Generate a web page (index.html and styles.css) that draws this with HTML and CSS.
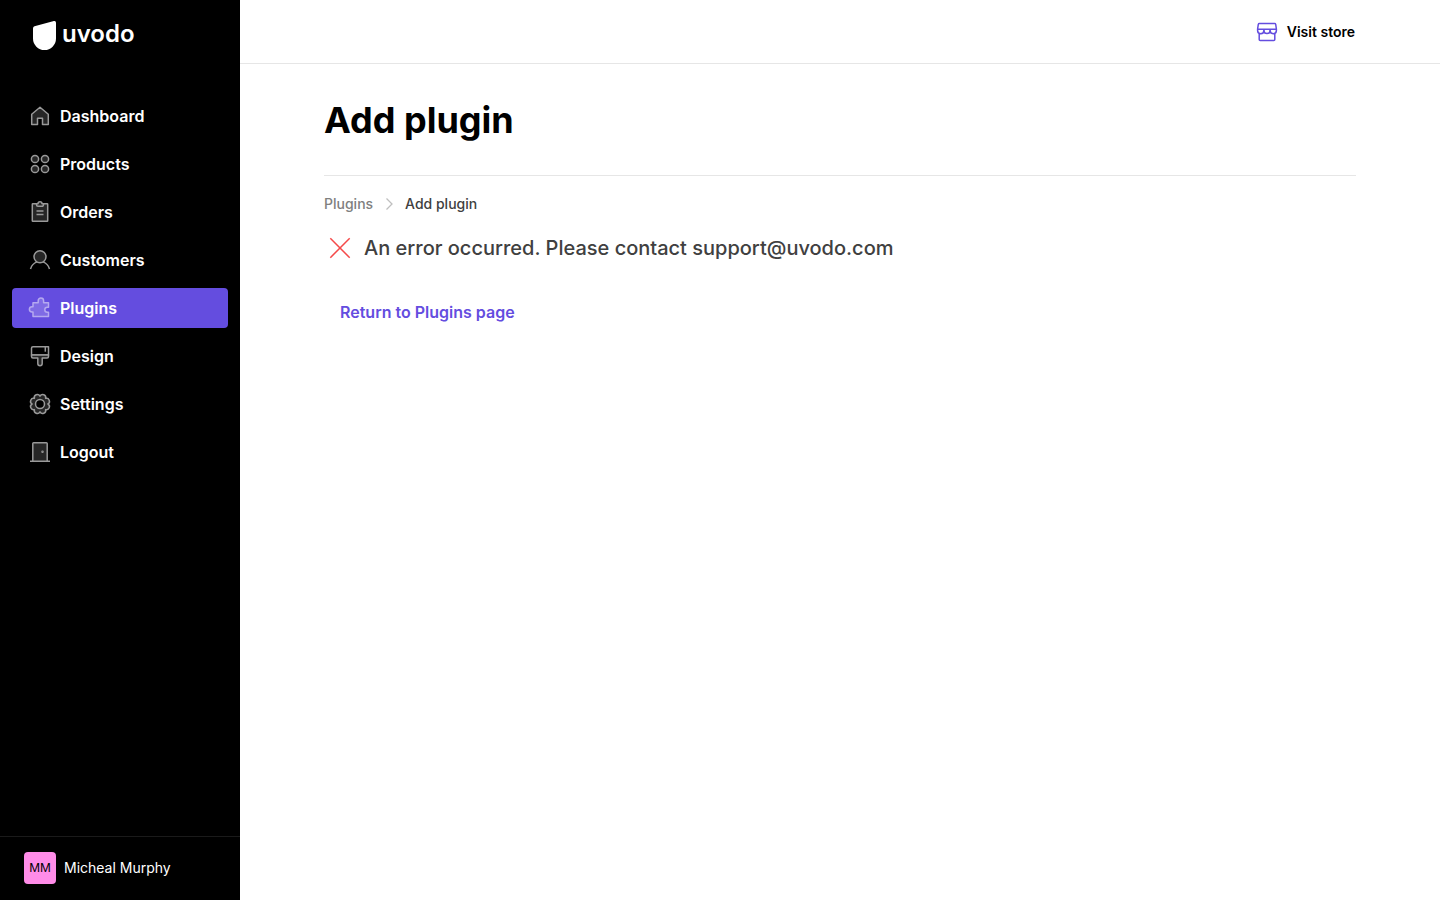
FILE: index.html
```html
<!DOCTYPE html>
<html lang="en">

  <head>
    <meta charset="utf-8">
    <meta name="viewport" content="width=device-width, initial-scale=1">
    <title>Add plugin</title>
    <link rel="stylesheet" href="styles.css">
  </head>

  <body>
    <aside class="sidebar">
      <a class="logo" href="#">
        <svg width="24" height="30" viewBox="0 0 24 30" aria-hidden="true">
          <path d="M2.500 6.300 21.900 1.100Q24 .7 24 2.700V18.500A11.500 11.500 0 0 1 1 18.500V8.500Q1 6.700 2.500 6.300Z" fill="#fff"/>
        </svg>
        <span>uvodo</span>
      </a>

      <nav class="menu">
        <a class="menu-item" href="#">
          <svg class="icon" viewBox="0 0 24 24" aria-hidden="true">
            <path d="M3.700 10.200 12 3.200l8.300 7v10.300H14.500v-6.200h-5v6.200H3.700Z"/>
          </svg>
          Dashboard
        </a>
        <a class="menu-item" href="#">
          <svg class="icon" viewBox="0 0 24 24" aria-hidden="true">
            <circle cx="7" cy="7" r="3.600"/>
            <circle cx="17" cy="7" r="3.600"/>
            <circle cx="7" cy="17" r="3.600"/>
            <circle cx="17" cy="17" r="3.600"/>
          </svg>
          Products
        </a>
        <a class="menu-item" href="#">
          <svg class="icon" viewBox="0 0 24 24" aria-hidden="true">
            <rect x="4.300" y="3.800" width="15.400" height="17.500" rx=".5"/>
            <path d="M8.500 3.800H10a2 2 0 0 1 4 0h1.500v1a1.500 1.500 0 0 1-1.500 1.500h-4a1.500 1.500 0 0 1-1.500-1.500Z"/>
            <path d="M8.500 11h7M8.500 14.500h7"/>
          </svg>
          Orders
        </a>
        <a class="menu-item" href="#">
          <svg class="icon" viewBox="0 0 24 24" aria-hidden="true">
            <circle cx="12" cy="8.700" r="6"/>
            <path d="M2.500 21c1-3.500 3.500-6 6.500-7.100M21.500 21c-1-3.500-3.500-6-6.500-7.100" fill="none"/>
          </svg>
          Customers
        </a>
        <a class="menu-item active" href="#" aria-current="page">
          <svg class="icon" viewBox="0 0 24 24" aria-hidden="true">
            <path d="M5 6.800h5.200V4.700a2.700 2.700 0 0 1 5.400 0v2.100h4.900v4.400h-1.200a2.500 2.500 0 0 0 0 5h1.200v4.200H5v-4.500H4a2.600 2.600 0 0 1 0-5.200h1Z"/>
          </svg>
          Plugins
        </a>
        <a class="menu-item" href="#">
          <svg class="icon" viewBox="0 0 24 24" aria-hidden="true">
            <path d="M5 2.700h15.500V11h-17V4.200Q3.500 2.700 5 2.700Z" fill="none"/>
            <path d="M3.500 11h17v1.500q0 1.500-1.500 1.500h-4.800v5.500a2.200 2.200 0 0 1-4.400 0V14H5q-1.500 0-1.500-1.500Z"/>
            <path d="M17.300 2.700v5"/>
          </svg>
          Design
        </a>
        <a class="menu-item" href="#">
          <svg class="icon" viewBox="0 0 24 24" aria-hidden="true">
            <path d="M12 4.100A3.050 3.050 0 0 1 17.600 6.400 3.050 3.050 0 0 1 19.900 12 3.050 3.050 0 0 1 17.600 17.600 3.050 3.050 0 0 1 12 19.900 3.050 3.050 0 0 1 6.400 17.600 3.050 3.050 0 0 1 4.100 12 3.050 3.050 0 0 1 6.400 6.400 3.050 3.050 0 0 1 12 4.100Z"/>
            <circle cx="12" cy="12" r="4.500" fill="#000"/>
          </svg>
          Settings
        </a>
        <a class="menu-item" href="#">
          <svg class="icon" viewBox="0 0 24 24" aria-hidden="true">
            <path d="M4.800 21.200V3.500q0-.8.800-.8h12.800q.8 0 .8.800v17.700M2 21.200h20"/>
            <circle cx="14.500" cy="11.800" r=".5"/>
          </svg>
          Logout
        </a>
      </nav>

      <a class="user" href="#">
        <span class="avatar">MM</span>
        Micheal Murphy
      </a>
    </aside>

    <div class="page">
      <header class="topbar">
        <a class="store-link" href="#">
          <svg class="icon store-icon" viewBox="0 0 24 24" aria-hidden="true">
            <path d="M4.300 3.600h15.400q.8 0 1 .8l.7 4.600v1.500a3.100 3.100 0 0 1-6.300 0 3.100 3.100 0 0 1-6.200 0 3.100 3.100 0 0 1-6.300 0V9l.7-4.600q.2-.8 1-.8ZM2.700 9.300h18.600M4.200 13.500v6q0 1 1 1h13.600q1 0 1-1v-6"/>
            <path d="M8.900 9.300v1.500M15.100 9.300v1.500"/>
          </svg>
          Visit store
        </a>
      </header>

      <main class="content">
        <h1 class="title">Add plugin</h1>
        <nav class="breadcrumb" aria-label="Breadcrumb">
          <a href="#">Plugins</a>
          <svg width="8" height="12" viewBox="0 0 8 12" aria-hidden="true">
            <path d="M1.500 .5 7 6 1.500 11.500"/>
          </svg>
          <span>Add plugin</span>
        </nav>
        <p class="message">
          <svg width="32" height="32" viewBox="0 0 32 32" aria-hidden="true">
            <path d="M6.300 6.300 25.700 25.700M25.700 6.300 6.300 25.700"/>
          </svg>
          An error occurred. Please contact support@uvodo.com
        </p>
        <a class="return-link" href="#">Return to Plugins page</a>
      </main>
    </div>
  </body>

</html>
```

FILE: styles.css
```css
* {
  box-sizing: border-box;
}
body {
  display: flex;
  min-height: 100vh;
  margin: 0;
  background: #fff;
  color: #000;
  font-family: Inter, "Liberation Sans", sans-serif;
  font-size: 16px;
  line-height: 24px;
}
a {
  color: inherit;
  text-decoration: none;
}

/* sidebar */
.sidebar {
  display: flex;
  flex-direction: column;
  flex: 0 0 240px;
  background: #000;
  color: #fff;
}
.logo {
  display: flex;
  gap: 6px;
  padding: 20px 32px 0;
  font-size: 24px;
  font-weight: 600;
  line-height: 28px;
}
.menu {
  display: flex;
  flex-direction: column;
  gap: 8px;
  padding: 46px 12px 0;
}
.menu-item {
  display: flex;
  align-items: center;
  gap: 8px;
  padding: 8px 16px;
  border-radius: 4px;
  font-weight: 600;
}
.icon {
  width: 24px;
  height: 24px;
  fill: #262626;
  stroke: #999;
  stroke-width: 1.5;
  stroke-linejoin: round;
}
.active {
  background: #644ddf;
}
.active .icon {
  fill: #7f6be5;
  stroke: #b5a9f0;
}
.user {
  display: flex;
  align-items: center;
  gap: 8px;
  margin-top: auto;
  padding: 15px 24px 16px;
  border-top: 1px solid #1a1a1a;
  font-size: 14px;
}
.avatar {
  width: 32px;
  border-radius: 4px;
  background: #ff8ce8;
  color: #000;
  font-size: 12px;
  line-height: 32px;
  text-align: center;
}

/* page */
.page {
  flex: 1;
}
.topbar {
  display: flex;
  justify-content: flex-end;
  height: 64px;
  padding: 0 85px;
  border-bottom: 1px solid #e6e6e6;
}
.store-link {
  display: flex;
  align-items: center;
  gap: 8px;
  font-size: 14px;
  font-weight: 600;
}
.store-icon {
  fill: none;
  stroke: #644ddf;
}
.content {
  padding: 32px 84px;
}
.title {
  margin: 0;
  padding-bottom: 31px;
  border-bottom: 1px solid #e6e6e6;
  font-size: 36px;
  font-weight: 700;
  line-height: 48px;
}
.breadcrumb {
  display: flex;
  align-items: center;
  gap: 12px;
  padding: 16px 0;
  color: #808080;
  font-size: 14px;
  font-weight: 500;
}
.breadcrumb span {
  color: #404040;
}
.breadcrumb svg {
  fill: none;
  stroke: #bfbfbf;
  stroke-width: 1.3;
}
.message {
  display: flex;
  align-items: center;
  gap: 8px;
  margin: 0 0 36px;
  color: #404040;
  font-size: 20px;
  font-weight: 500;
  line-height: 32px;
}
.message svg {
  stroke: #f54a4a;
  stroke-width: 1.5;
}
.return-link {
  padding: 8px 16px;
  color: #644ddf;
  font-weight: 600;
}
```
